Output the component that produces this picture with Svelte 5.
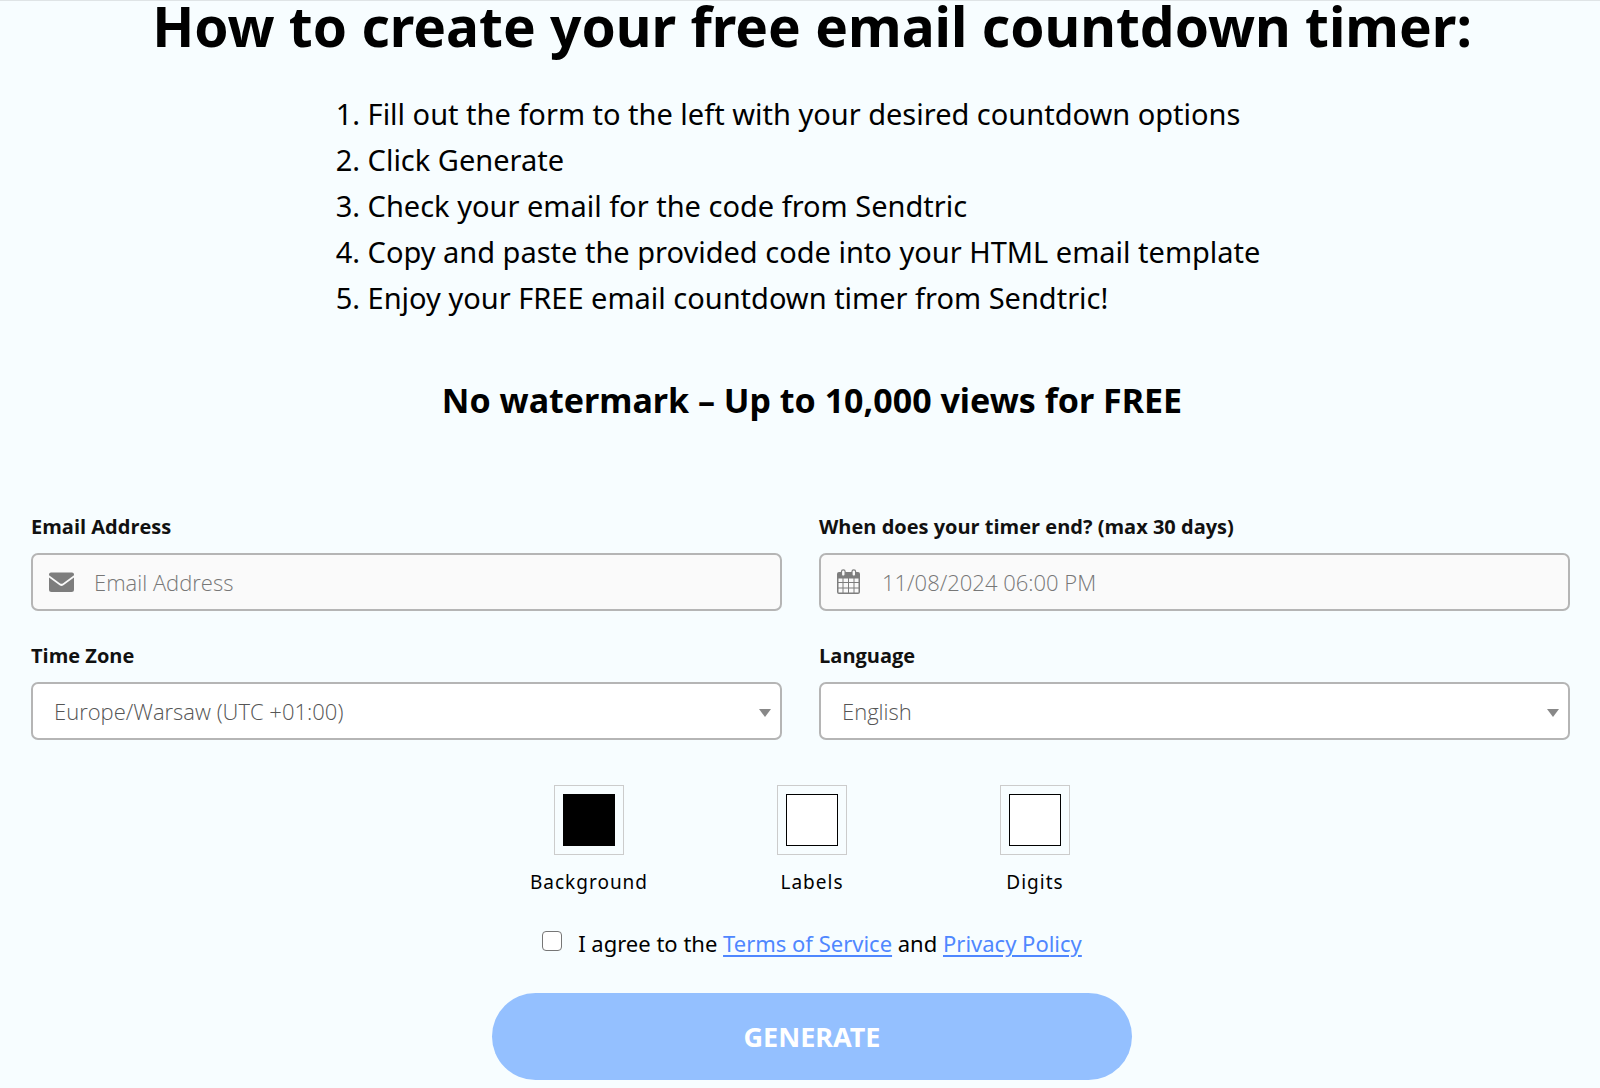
<script lang="ts">
  type Swatch = { id: string; label: string; color: string };

  const steps = [
    "Fill out the form to the left with your desired countdown options",
    "Click Generate",
    "Check your email for the code from Sendtric",
    "Copy and paste the provided code into your HTML email template",
    "Enjoy your FREE email countdown timer from Sendtric!"
  ];

  const swatches: Swatch[] = [
    { id: "background", label: "Background", color: "#000000" },
    { id: "labels", label: "Labels", color: "#ffffff" },
    { id: "digits", label: "Digits", color: "#ffffff" }
  ];

  let email = $state("");
  let endsAt = $state("");
  let timeZone = $state("Europe/Warsaw");
  let language = $state("en");
  let agreed = $state(false);
</script>

<main class="page">
  <section class="intro">
    <h1>How to create your free email countdown timer:</h1>
    <ol>
      {#each steps as step}
        <li>{step}</li>
      {/each}
    </ol>
    <h2>No watermark – Up to 10,000 views for FREE</h2>
  </section>

  <form onsubmit={(e) => e.preventDefault()}>
    <div class="fields">
      <div class="field">
        <label for="email">Email Address</label>
        <div class="control">
          <svg class="icon" viewBox="0 0 26 26" aria-hidden="true">
            <path d="M1 5.5Q1 3.5 3 3.5H24Q26 3.5 26 5.5V6.2L14.8 14.4Q13.5 15.3 12.2 14.4L1 6.2Z" />
            <path d="M1 8.6L11.6 16.3Q13.5 17.6 15.4 16.3L26 8.6V20.5Q26 23 23.5 23H3.5Q1 23 1 20.5Z" />
          </svg>
          <input id="email" type="email" placeholder="Email Address" bind:value={email} />
        </div>
      </div>

      <div class="field">
        <label for="ends-at">When does your timer end? (max 30 days)</label>
        <div class="control">
          <svg class="icon" viewBox="0 0 26 26" aria-hidden="true">
            <path
              fill-rule="evenodd"
              d="M3 3H22Q24 3 24 5V23Q24 25 22 25H3Q1 25 1 23V5Q1 3 3 3ZM2.5 9.5V13H6.5V9.5ZM7.5 9.5V13H12V9.5ZM13 9.5V13H17.5V9.5ZM18.5 9.5V13H22.5V9.5ZM2.5 14V18.5H6.5V14ZM7.5 14V18.5H12V14ZM13 14V18.5H17.5V14ZM18.5 14V18.5H22.5V14ZM2.5 19.5V23.5H6.5V19.5ZM7.5 19.5V23.5H12V19.5ZM13 19.5V23.5H17.5V19.5ZM18.5 19.5V23.5H22.5V19.5Z"
            />
            <rect class="ring" x="5.5" y="0.8" width="3.6" height="6.4" rx="1.8" />
            <rect class="ring" x="16" y="0.8" width="3.6" height="6.4" rx="1.8" />
          </svg>
          <input id="ends-at" type="text" placeholder="11/08/2024 06:00 PM" bind:value={endsAt} />
        </div>
      </div>

      <div class="field">
        <label for="time-zone">Time Zone</label>
        <div class="control select">
          <select id="time-zone" bind:value={timeZone}>
            <option value="Europe/Warsaw">Europe/Warsaw (UTC +01:00)</option>
          </select>
        </div>
      </div>

      <div class="field">
        <label for="language">Language</label>
        <div class="control select">
          <select id="language" bind:value={language}>
            <option value="en">English</option>
          </select>
        </div>
      </div>
    </div>

    <div class="options">
      <div class="swatches">
        {#each swatches as swatch}
          <div class="swatch">
            <button type="button" id={swatch.id} aria-labelledby="{swatch.id}-label">
              <span style="background: {swatch.color}"></span>
            </button>
            <label id="{swatch.id}-label" for={swatch.id}>{swatch.label}</label>
          </div>
        {/each}
      </div>

      <div class="terms">
        <input id="agree" type="checkbox" bind:checked={agreed} />
        <label for="agree">I agree to the <a href="#terms">Terms of Service</a> and <a href="#privacy">Privacy Policy</a></label>
      </div>

      <button class="generate" type="submit">GENERATE</button>
    </div>
  </form>
</main>

<style>
  :global(body) { background: #f7fdff; }

  .page {
    padding-bottom: 7px;
    border-top: 1px solid #dfe4e6;
    color: #000;
    font-family: "Noto Sans", sans-serif;
    background: #f7fdff;
  }

  .intro,
  .options {
    display: flex;
    flex-direction: column;
    align-items: center;
    padding-left: 24px;
  }

  h1 { margin: 0; font-size: 55px; line-height: 50px; font-weight: 700; text-align: center; }
  h2 { margin: 56px 0 0; font-size: 34px; line-height: 46px; font-weight: 700; text-align: center; }
  ol { margin: 40px 0 0; padding: 0 24px 0 28px; font-size: 29px; line-height: 46px; }

  form { margin-top: 90px; }

  .fields {
    display: grid;
    grid-template-columns: repeat(2, minmax(0, 1fr));
    gap: 31px 37px;
    padding: 0 30px 0 31px;
    font-family: "Open Sans", sans-serif;
  }

  .field { display: grid; gap: 12px; }
  .field label { font-size: 20px; line-height: 28px; font-weight: 700; color: #111; }

  .control { position: relative; display: flex; }
  .control input,
  .control select {
    box-sizing: border-box;
    width: 100%;
    height: 58px;
    margin: 0;
    border: 2px solid #b5b5b5;
    border-radius: 7px;
    padding: 0 21px;
    background: #fff;
    color: #555;
    font: 300 22px "Open Sans", sans-serif;
    appearance: none;
  }
  .control input { padding-left: 61px; background: #fafafa; }
  .control input::placeholder { color: #777; opacity: 1; }

  .icon {
    position: absolute;
    top: 16px;
    left: 17px;
    width: 26px;
    height: 26px;
    fill: #7d7d7d;
    pointer-events: none;
  }
  .ring { fill: #fafafa; stroke: #7d7d7d; stroke-width: 1.2; }

  .select::after {
    content: "";
    position: absolute;
    top: 27px;
    right: 11px;
    border: 6px solid transparent;
    border-top: 8px solid #888;
    border-bottom: 0;
    pointer-events: none;
  }

  .swatches { display: flex; gap: 23px; margin-top: 45px; }
  .swatch { display: grid; justify-items: center; gap: 13px; width: 200px; }
  .swatch label { font-size: 20px; line-height: 28px; }
  .swatch button {
    box-sizing: border-box;
    width: 70px;
    height: 70px;
    padding: 8px;
    border: 1px solid #ccc;
    background: transparent;
    cursor: pointer;
  }
  .swatch span { display: block; box-sizing: border-box; height: 52px; border: 1px solid #000; }
  .swatch label { font-size: 19px; letter-spacing: 1px; }

  .terms { display: flex; align-items: flex-start; gap: 16px; margin-top: 29px; font-size: 22px; line-height: 36px; }
  .terms input {
    box-sizing: border-box;
    width: 20px;
    height: 20px;
    margin: 6px 0 0;
    border: 1px solid #767676;
    border-radius: 4px;
    background: #fff;
    appearance: none;
  }
  .terms input:checked { background: #4f87ff; }
  .terms a { color: #4f87ff; text-decoration-thickness: 2px; text-underline-offset: 3px; }

  .generate {
    width: 640px;
    max-width: 100%;
    height: 87px;
    margin-top: 32px;
    border: 0;
    border-radius: 44px;
    background: #94c0ff;
    color: #fff;
    font: 700 27px "Noto Sans", sans-serif;
    cursor: pointer;
  }
</style>
